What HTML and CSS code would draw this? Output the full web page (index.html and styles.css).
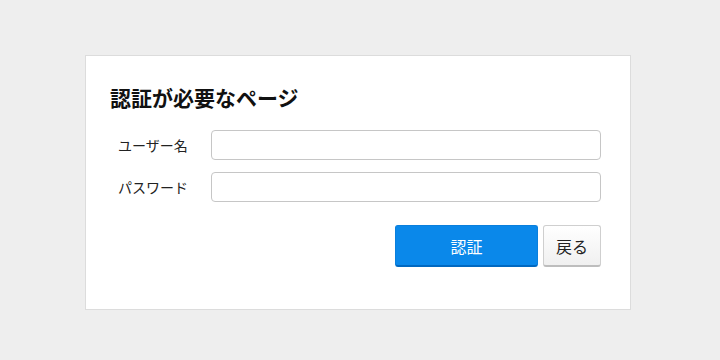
FILE: index.html
```html
<!DOCTYPE html>
<html lang="ja">
<head>
	<title>認証が必要なページ</title>
	<meta charset="utf-8">
	<link rel="stylesheet" href="styles.css">
</head>
<body>
	<div class="card">
		<h1 class="title">認証が必要なページ</h1>
		<form class="login" action="" method="post" onsubmit="return false;">
			<div class="row">
				<label class="label" for="user">ユーザー名</label>
				<input class="field" type="text" id="user" name="user">
			</div>
			<div class="row">
				<label class="label" for="pass">パスワード</label>
				<input class="field" type="password" id="pass" name="pass">
			</div>
			<div class="actions">
				<button type="submit" class="btn btn-primary">認証</button>
				<button type="button" class="btn btn-back">戻る</button>
			</div>
		</form>
	</div>
</body>
</html>
```

FILE: styles.css
```css
html, body {
	margin: 0;
	background-color: #eeeeee;
}
body {
	padding: 55px 89px 0 85px;
	font-family: "Noto Sans CJK JP", "Noto Sans", sans-serif;
	color: #222;
}
.card {
	background-color: #fff;
	border: 1px solid #dcdcdc;
	box-shadow: 0 2px 0 #dedede;
	padding: 26px 29px 42px 24px;
}
.title {
	margin: 0 0 18px 0;
	font-size: 21px;
	line-height: 30px;
	font-weight: bold;
	color: #111;
}
.row {
	display: flex;
	align-items: center;
	margin-bottom: 12px;
}
.label {
	width: 93px;
	padding-left: 8px;
	font-size: 14px;
	color: #222;
}
.field {
	flex: 1;
	height: 30px;
	box-sizing: border-box;
	margin: 0;
	border: 1px solid #c6c6c6;
	border-radius: 4px;
	padding: 4px 8px;
	font-size: 14px;
}
.actions {
	display: flex;
	justify-content: flex-end;
	gap: 5px;
	margin-top: 23px;
}
.btn {
	height: 42px;
	box-sizing: border-box;
	margin: 0;
	font-family: inherit;
	font-size: 16px;
	border-radius: 3px;
	cursor: pointer;
}
.btn-primary {
	width: 143px;
	background-color: #0a88ea;
	border: 1px solid #0a7fdc;
	border-bottom: 2px solid #0068c0;
	color: #fff;
}
.btn-back {
	width: 58px;
	padding: 0;
	background: linear-gradient(#ffffff, #f0f0f0);
	border: 1px solid #cfcfcf;
	border-bottom: 2px solid #bdbdbd;
	color: #222;
}
```
